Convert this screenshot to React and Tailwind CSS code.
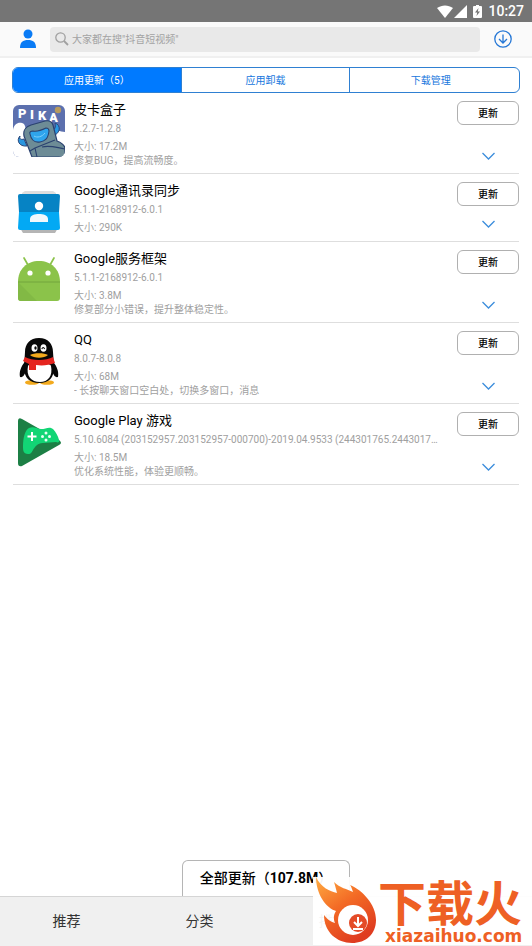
import React, { useState } from 'react'

const PikaIcon = () => (
  <svg viewBox="0 0 52 52" className="w-[52px] h-[52px]">
    <defs>
      <clipPath id="pika-clip">
        <rect width="52" height="52" rx="6" />
      </clipPath>
    </defs>
    <g clipPath="url(#pika-clip)">
      <rect width="52" height="52" fill="#5c70ae" />
      <path d="M0 25 C1 19 5 17 9 18 C13 19 13 25 13 30 L43 26 C46 25 49 27 52 27 V52 H0Z" fill="#fff" />
      <circle cx="45" cy="5" r="3.2" fill="#b79a5e" />
      <g fill="#fff" fontFamily="Roboto, sans-serif" fontWeight="900" fontSize="13">
        <text x="5" y="13">P</text>
        <text x="17" y="14">I</text>
        <text x="25" y="15">K</text>
        <text x="36" y="17">A</text>
      </g>
      <path d="M38 26 C42 25 43 22 42 18 C48 20 48 28 40 31Z M7 31 C6 34 8 35 11 34 L14 41 C6 42 3 35 7 31Z" fill="#2996e0" stroke="#2b4779" strokeWidth="1" />
      <path d="M11 31 C10 25 12 22 18 20 L32 16 C37 15 39 17 40 20 L44 36 C49 38 52 41 52 44 V52 H19Z" fill="#6d8c96" stroke="#2b4270" strokeWidth="1.2" />
      <path d="M17 29 C16 27 18 26 20 26 C25 27 29 25 33 23 C35 23 36 24 36 26 C35 34 32 36 27 37 C21 38 18 34 17 29Z" fill="#2fa4ec" stroke="#2b4270" strokeWidth="1.1" />
      <path d="M21 31 C24 33 29 32 32 28" fill="none" stroke="#7fd0fa" strokeWidth="1" />
      <path d="M17 46 L22 43 L42 35 M22 43 L24 52 M29 42 C37 40 41 42 52 44" fill="none" stroke="#2b4270" strokeWidth="1.1" />
    </g>
  </svg>
)

const ContactsIcon = () => (
  <svg viewBox="0 0 52 52" className="w-[52px] h-[52px]">
    <path d="M9 7 L12 5 H40 L43 7 V11 H9Z" fill="#dedede" />
    <path d="M7 42 H45 L42 47 H10Z" fill="#b5b5b5" />
    <path d="M7 8 H45 Q47 8 47 10 L46 26 H6 L5 10 Q5 8 7 8Z" fill="#0683c4" />
    <path d="M6 26 H46 L47 42 Q47 44 45 44 H7 Q5 44 5 42Z" fill="#03a9f4" />
    <circle cx="26" cy="20" r="4.2" fill="#fff" />
    <path d="M17 36 V33 C17 29 22 28 26 28 C30 28 35 29 35 33 V36Z" fill="#f1f8fc" />
  </svg>
)

const AndroidIcon = () => (
  <svg viewBox="0 0 52 52" className="w-[52px] h-[52px]">
    <path d="M11 4 L15 11 M41 4 L37 11" stroke="#8bc34a" strokeWidth="1.7" strokeLinecap="round" />
    <path d="M5 28 C5 15 14 7 26 7 C38 7 47 15 47 28 V44 Q47 47 44 47 H8 Q5 47 5 44Z" fill="#8bc34a" />
    <path d="M5 28 L24 47 H8 Q5 47 5 44Z" fill="#82b945" />
    <path d="M5 28 H47" stroke="#73a53c" strokeWidth="1" />
    <circle cx="17" cy="19" r="2.6" fill="#fff" />
    <circle cx="35" cy="19" r="2.6" fill="#fff" />
  </svg>
)

const QQIcon = () => (
  <svg viewBox="0 0 52 52" className="w-[52px] h-[52px]">
    <ellipse cx="19" cy="47.5" rx="7" ry="2.3" fill="#f3aa1d" />
    <ellipse cx="34" cy="47.5" rx="7" ry="2.3" fill="#f3aa1d" />
    <path d="M12 27 C8 31 6 37 7 42 C10 43 12 39 13 36Z M40 27 C44 31 46 37 45 42 C42 43 40 39 39 36Z" fill="#080808" />
    <path d="M26 3 C17 3 12 9 12 17 L11 32 C11 43 17 48 26 48 C36 48 41 43 41 32 L40 17 C40 9 35 3 26 3Z" fill="#080808" />
    <path d="M15 31 C16 28 37 27 38 31 C40 41 35 47 27 47 C18 47 13 41 15 31Z" fill="#fff" />
    <path d="M12 22 C19 26 33 26 40 22 L42 28 C36 30 30 31 23 30 V35 H16 V29 L10 26Z" fill="#e5251f" />
    <ellipse cx="21.5" cy="13" rx="3" ry="3.8" fill="#fff" />
    <ellipse cx="30.5" cy="13" rx="3" ry="3.8" fill="#fff" />
    <ellipse cx="22.5" cy="13" rx="1.2" ry="1.8" fill="#080808" />
    <path d="M28.8 14 Q30.2 11 31.6 14" fill="none" stroke="#080808" strokeWidth="1.1" />
    <path d="M17 20 C21 17.5 31 17.5 35 20 C31 23.5 21 23.5 17 20Z" fill="#f3aa1d" />
  </svg>
)

const PlayGamesIcon = () => (
  <svg viewBox="0 0 52 52" className="w-[52px] h-[52px]">
    <path d="M5 5 Q5 1 9 3 L46 24 Q50 27 46 29 L9 50 Q5 51 5 47Z" fill="#1c7f45" />
    <path d="M10 30 C10 22 12 14 16 12 C21 10 24 13 28 13 C33 13 36 10 40 13 C43 16 45 20 46 24 C47 26 45 27 43 26 L30 27 C24 27 22 31 20 34 C18 38 17 38 15 38 C10 38 10 34 10 30Z" fill="#12d575" />
    <path d="M19 16 V25 M14.5 20.5 H23.5" stroke="#fff" strokeWidth="2" />
    <g fill="#eafff3">
      <circle cx="33" cy="17" r="1.5" />
      <circle cx="33" cy="24" r="1.5" />
      <circle cx="29.5" cy="20.5" r="1.5" />
      <circle cx="36.5" cy="20.5" r="1.5" />
    </g>
  </svg>
)

const apps = [
  { name: '皮卡盒子', version: '1.2.7-1.2.8', size: '17.2M', note: '修复BUG，提高流畅度。', Icon: PikaIcon },
  { name: 'Google通讯录同步', version: '5.1.1-2168912-6.0.1', size: '290K', Icon: ContactsIcon },
  { name: 'Google服务框架', version: '5.1.1-2168912-6.0.1', size: '3.8M', note: '修复部分小错误，提升整体稳定性。', Icon: AndroidIcon },
  { name: 'QQ', version: '8.0.7-8.0.8', size: '68M', note: '- 长按聊天窗口空白处，切换多窗口，消息', Icon: QQIcon },
  {
    name: 'Google Play 游戏',
    version: '5.10.6084 (203152957.203152957-000700)-2019.04.9533 (244301765.2443017…',
    size: '18.5M',
    note: '优化系统性能，体验更顺畅。',
    Icon: PlayGamesIcon
  }
]

const tabs = ['应用更新（5）', '应用卸载', '下载管理']

const StatusBar = () => (
  <div className="h-[22px] bg-[#757575] flex items-center justify-end pr-2 text-white">
    <svg viewBox="0 0 16 13" className="w-4 h-[13px]">
      <path d="M0 3 C5 -0.5 11 -0.5 16 3 L8 13Z" fill="#fff" />
    </svg>
    <svg viewBox="0 0 13 13" className="w-[13px] h-[13px] ml-px">
      <path d="M13 0 V13 H0Z" fill="#fff" />
    </svg>
    <svg viewBox="0 0 9 13" className="w-[9px] h-[13px] ml-[6px]">
      <path d="M3 0 H6 V1 H8 Q9 1 9 2 V12 Q9 13 8 13 H1 Q0 13 0 12 V2 Q0 1 1 1 H3Z" fill="#fff" />
      <path d="M5.5 3 L2 7.5 H4.2 L3.5 11 L7 6.5 H4.8Z" fill="#757575" />
    </svg>
    <span className="ml-[6px] text-[14px] leading-5 font-medium">10:27</span>
  </div>
)

const Header = () => (
  <header className="h-9 bg-[#fafafa] border-b-2 border-[#f0f0f0] flex items-center">
    <button aria-label="个人中心" className="ml-5 w-4 h-5">
      <svg viewBox="0 0 16 20" className="w-4 h-5">
        <circle cx="8" cy="5" r="4.5" fill="#0a7bf5" />
        <path d="M0 19 C0 13 3 11 8 11 C13 11 16 13 16 19Z" fill="#0a7bf5" />
      </svg>
    </button>
    <label className="ml-[14px] flex-1 h-[25px] rounded-sm bg-[#e9e9e9] flex items-center pl-[5px]">
      <svg viewBox="0 0 14 14" className="w-[14px] h-[14px] shrink-0" fill="none" stroke="#a0a0a0">
        <circle cx="5.5" cy="5.5" r="4.7" strokeWidth="1.3" />
        <path d="M9 9 L13 13" strokeWidth="1.8" />
      </svg>
      <input
        type="text"
        aria-label="搜索"
        placeholder={'大家都在搜"抖音短视频"'}
        className="ml-[3px] flex-1 min-w-0 bg-transparent text-[10px] outline-none placeholder:text-[#a3a3a3]"
      />
    </label>
    <button aria-label="下载" className="ml-[14px] mr-5 w-[18px] h-[18px]">
      <svg viewBox="0 0 18 18" className="w-[18px] h-[18px]" fill="none" stroke="#2577d6" strokeWidth="1.3">
        <circle cx="9" cy="9" r="8.2" />
        <path d="M9 4.5 V13 M5 9 L9 13 L13 9" />
      </svg>
    </button>
  </header>
)

const AppRow = ({ app }) => {
  const { name, version, size, note, Icon } = app

  return (
    <li className="flex border-b border-[#dedede]">
      <div className="w-[52px] pt-3 shrink-0">
        <Icon />
      </div>
      <div className="ml-[9px] flex-1 min-w-0 pt-[7px] pb-[6px] text-[10px] text-[#a0a0a0]">
        <h3 className="text-[13px] leading-[19px] text-black">{name}</h3>
        <p className="leading-5 truncate">{version}</p>
        <p className="leading-[15px]">大小: {size}</p>
        {note && <p className="leading-[13px] truncate">{note}</p>}
      </div>
      <div className="w-[62px] shrink-0 flex flex-col items-center justify-between pt-2 pb-[13px]">
        <button className="w-full h-6 rounded-[6px] border border-[#b0b0b0] text-[10px] font-medium text-black">
          更新
        </button>
        <button aria-label="展开" className="h-2">
          <svg viewBox="0 0 13 8" className="w-[13px] h-2" fill="none" stroke="#3c8ddc" strokeWidth="1.3">
            <path d="M0.5 1 L6.5 7 L12.5 1" />
          </svg>
        </button>
      </div>
    </li>
  )
}

const SiteLogo = () => (
  <div className="absolute right-0 bottom-px w-[219px] h-[68px] bg-white/95 flex">
    <svg viewBox="0 0 65 68" className="w-[65px] h-[68px] shrink-0">
      <defs>
        <linearGradient id="flame" x1="0" y1="0" x2="0.6" y2="1">
          <stop offset="0" stopColor="#ffad42" />
          <stop offset="0.5" stopColor="#f36a25" />
          <stop offset="1" stopColor="#df3c20" />
        </linearGradient>
      </defs>
      <path d="M3 0 C8 11 17 14 24 16 C23 12 22 8 21 5 C27 11 34 12 40 15 C39 12 38 9 37 8 C49 13 63 27 63 43 C63 57 53 66 39 66 C24 66 11 55 11 38 C15 43 18 45 22 46 C20 41 21 37 23 34 C13 31 3 17 3 0Z" fill="url(#flame)" />
      <circle cx="40" cy="43" r="15" fill="#fff" />
      <circle cx="45" cy="46" r="9" fill="#e44b28" />
      <path d="M45 40 V48 M41 45 L45 49 L49 45 M40 52 H50" fill="none" stroke="#fff" strokeWidth="2" />
    </svg>
    <div className="pt-1 text-[#ee6024] whitespace-nowrap">
      <div className="font-['Noto_Sans_CJK_SC',sans-serif] text-[48px] leading-[38px] font-bold">下载火</div>
      <div className="mt-[10px] pl-[7px] font-['DejaVu_Sans',sans-serif] text-[17px] leading-[14px] font-bold">xiazaihuo.com</div>
    </div>
  </div>
)

const App = () => {
  const [activeTab, setActiveTab] = useState(0)

  return (
    <div className="min-h-screen bg-white flex flex-col font-[Roboto,'Noto_Sans_CJK_SC',sans-serif]">
      <StatusBar />
      <Header />

      <main className="flex-1 flex flex-col px-3 pt-[9px]">
        {/* Tabs */}
        <div className="h-[26px] grid grid-cols-3 rounded-[6px] border border-[#2f80d2] overflow-hidden divide-x divide-[#2f80d2]">
          {tabs.map((tab, i) => (
            <button
              key={tab}
              onClick={() => setActiveTab(i)}
              className={`text-[10px] last:pr-2 ${
                activeTab === i ? 'bg-[#007aff] text-white' : 'text-[#1676dd]'
              }`}
            >
              {tab}
            </button>
          ))}
        </div>

        {/* App list */}
        <ul className="mx-px">
          {apps.map((app) => (
            <AppRow key={app.name} app={app} />
          ))}
        </ul>

        <button className="mt-auto self-center w-[168px] h-9 rounded-t-[6px] border border-b-0 border-[#b5b5b5] text-[14px] font-medium text-black">
          全部更新（<b>107.8M</b>）
        </button>
      </main>

      {/* Bottom navigation */}
      <footer className="relative">
        <nav className="h-[50px] bg-[#f0f0f0] border-t border-[#d5d5d5] grid grid-cols-4 items-center text-center text-[14px] text-[#333]">
          <a href="#recommend">推荐</a>
          <a href="#category">分类</a>
          <a href="#rank">排行</a>
          <a href="#manage" aria-label="管理" className="h-full" />
        </nav>
        <SiteLogo />
      </footer>
    </div>
  )
}

export default App
